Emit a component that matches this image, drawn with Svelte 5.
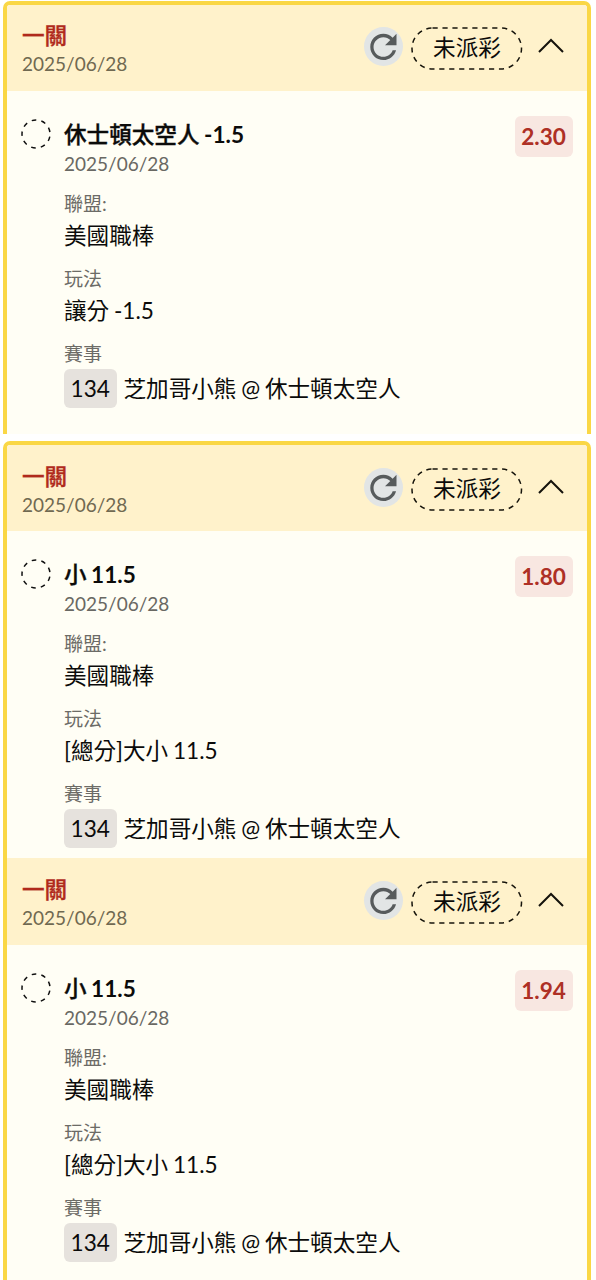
<script>
  const tickets = [
    { pick: '休士頓太空人', line: '-1.5', odds: '2.30', play: '讓分 -1.5', kind: 'first' },
    { pick: '小', line: '11.5', odds: '1.80', play: '[總分]大小 11.5', kind: 'second' },
    { pick: '小', line: '11.5', odds: '1.94', play: '[總分]大小 11.5', kind: 'third' }
  ];
</script>

<main>
  {#each tickets as t}
    <article class={t.kind}>
      <header>
        <div class="heading">
          <h2>一關</h2>
          <p class="date">2025/06/28</p>
        </div>
        <button class="refresh" aria-label="refresh">
          <svg viewBox="0 0 39 39" width="39" height="39">
            <path transform="translate(-0.3 0.3) scale(1.64)" fill="#575b5c" d="M17.65 6.35C16.2 4.9 14.21 4 12 4c-4.42 0-7.99 3.58-7.99 8s3.57 8 7.99 8c3.73 0 6.84-2.55 7.73-6h-2.08c-.82 2.33-3.04 4-5.65 4-3.31 0-6-2.69-6-6s2.69-6 6-6c1.66 0 3.14.69 4.22 1.78L13 11h7V4l-2.35 2.35z" />
          </svg>
        </button>
        <span class="status">
          <svg viewBox="0 0 112 43" width="112" height="43">
            <rect x="1" y="1" width="109.5" height="41" rx="20.5" fill="none" stroke="#17150c" stroke-width="1.5" stroke-dasharray="5.2 4.75" />
          </svg>
          <span>未派彩</span>
        </span>
        <svg class="chevron" viewBox="0 0 26 16" width="26" height="16">
          <path d="M1 14 13 2 25 14" fill="none" stroke="#15130c" stroke-width="2" />
        </svg>
      </header>
      <section>
        <svg class="pending" viewBox="0 0 30 30" width="30" height="30">
          <circle cx="15" cy="15" r="14" fill="none" stroke="#111" stroke-width="1.5" stroke-dasharray="4.6 5.174" stroke-dashoffset="-2.585" />
        </svg>
        <div class="details">
          <h3><span>{t.pick}</span> {t.line}</h3>
          <p class="date">2025/06/28</p>
          <dl>
            <dt>聯盟:</dt>
            <dd>美國職棒</dd>
            <dt>玩法</dt>
            <dd>{t.play}</dd>
            <dt>賽事</dt>
            <dd class="match"><span class="num">134</span><span>芝加哥小熊 @ 休士頓太空人</span></dd>
          </dl>
        </div>
        <strong class="odds">{t.odds}</strong>
      </section>
    </article>
  {/each}
</main>

<style>
  :global(body) { background: #fff; overflow: hidden; }
  main {
    box-sizing: border-box;
    height: 1280px;
    overflow: hidden;
    padding: 1px 5px 0 3px;
    font-family: Lato, "Noto Sans CJK TC", sans-serif;
    font-size: 22.6px;
    word-spacing: -1px;
    color: #0b0b0a;
  }
  h2, h3, p, dl, dt, dd { margin: 0; }
  article {
    box-sizing: border-box;
    border: solid #fad745;
    border-width: 4px 4px 0;
    border-radius: 7px 7px 0 0;
    background: #fffef5;
    overflow: hidden;
  }
  .first { height: 433px; margin-bottom: 7px; }
  .second { height: 417px; }
  .third { height: 430px; border-top-width: 0; border-radius: 0; }
  header {
    display: flex;
    align-items: center;
    box-sizing: border-box;
    height: 86px;
    padding: 0 22px 0 15px;
    background: #fff2cb;
  }
  .second header { padding-top: 2px; }
  .third header { height: 87px; padding-top: 1px; }
  .heading { flex: 1; padding-top: 2px; }
  h2 { font-size: 22.6px; line-height: 29px; font-weight: 500; -webkit-text-stroke: 0.35px currentColor; color: #b02a1c; }
  .date { font-size: 19px; line-height: 28px; color: #696863; }
  .heading .date { color: #706951; }
  .refresh {
    width: 39px;
    height: 39px;
    padding: 0;
    border: 0;
    border-radius: 50%;
    background: #e2e5e5;
    margin: 0 8px 3px 0;
  }
  .refresh svg { display: block; }
  .status {
    display: grid;
    place-items: center;
    width: 112px;
    height: 43px;
    margin-right: 15px;
  }
  .status > * { grid-area: 1 / 1; }
  .status > span { line-height: 30px; }
  .chevron { margin: 0 1px 4px 0; }
  section {
    display: flex;
    align-items: flex-start;
    padding: 25px 14.5px 0 14px;
  }
  .pending { margin: 3px 13px 0 0; flex: none; }
  .details { flex: 1; padding-top: 4px; }
  h3 { font-size: 22.6px; line-height: 30px; font-weight: 700; }
  h3 span { font-weight: 500; -webkit-text-stroke: 0.35px currentColor; }
  .details .date { line-height: 28px; }
  dt { margin-top: 12px; font-size: 19px; line-height: 26px; color: #6c6b66; }
  dt:first-child { margin-top: 13px; }
  dd { line-height: 37px; white-space: nowrap; }
  .match { display: flex; margin-top: 2px; gap: 7px; line-height: 39px; }
  .num {
    width: 52.5px;
    height: 39px;
    border-radius: 6px;
    background: #e6e2dd;
    text-align: center;
  }
  .odds {
    width: 58px;
    height: 41px;
    border-radius: 6px;
    background: #f8e7e1;
    color: #ae3025;
    font-weight: 700;
    line-height: 42px;
    text-align: center;
  }
</style>
